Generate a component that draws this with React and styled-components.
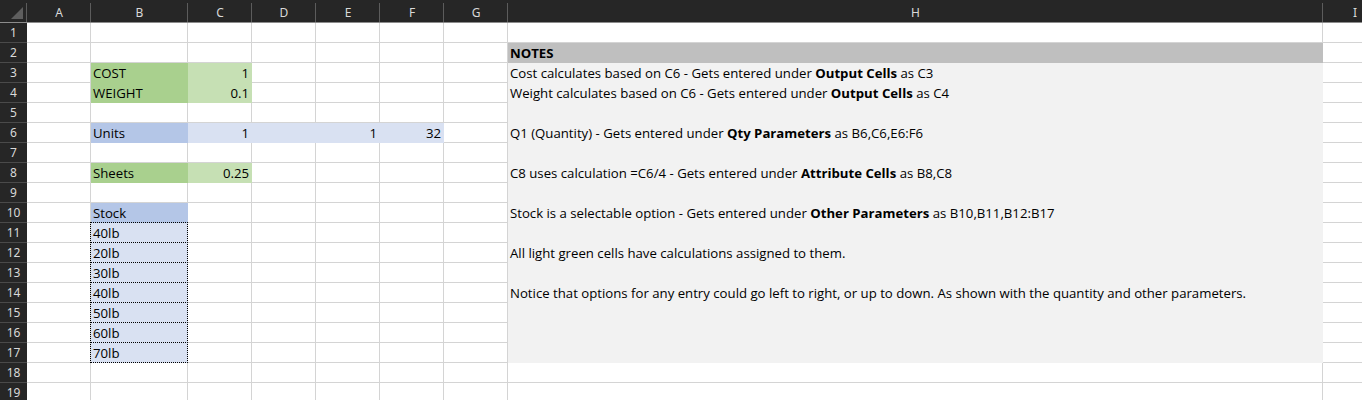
import React from "react";
import styled, { createGlobalStyle } from "styled-components";

const COLORS = {
  header: "#262626",
  headerText: "#d9d9d9",
  headerLine: "#4a4a4a",
  grid: "#d4d4d4",
  green: "#a9d08e",
  lightGreen: "#c6e0b4",
  blue: "#b4c6e7",
  lightBlue: "#d9e1f2",
  notesHead: "#bfbfbf",
  notes: "#f2f2f2",
};

const COLUMNS = [
  { key: "A", width: 64 },
  { key: "B", width: 97 },
  { key: "C", width: 64 },
  { key: "D", width: 64 },
  { key: "E", width: 64 },
  { key: "F", width: 64 },
  { key: "G", width: 64 },
  { key: "H", width: 815 },
  { key: "I", width: 64 },
];

const ROW_COUNT = 19;

// sparse sheet data: row -> column -> cell
const SHEET = {
  2: { H: { fill: COLORS.notesHead, bold: true, text: "NOTES" } },
  3: {
    B: { fill: COLORS.green, text: "COST" },
    C: { fill: COLORS.lightGreen, num: true, text: "1" },
    H: {
      fill: COLORS.notes,
      text: ["Cost calculates based on C6 - Gets entered under ", ["Output Cells"], " as C3"],
    },
  },
  4: {
    B: { fill: COLORS.green, text: "WEIGHT" },
    C: { fill: COLORS.lightGreen, num: true, text: "0.1" },
    H: {
      fill: COLORS.notes,
      text: ["Weight calculates based on C6 - Gets entered under ", ["Output Cells"], " as C4"],
    },
  },
  5: { H: { fill: COLORS.notes } },
  6: {
    B: { fill: COLORS.blue, text: "Units" },
    C: { fill: COLORS.lightBlue, num: true, text: "1" },
    D: { fill: COLORS.lightBlue },
    E: { fill: COLORS.lightBlue, num: true, text: "1" },
    F: { fill: COLORS.lightBlue, num: true, text: "32" },
    H: {
      fill: COLORS.notes,
      text: ["Q1 (Quantity) - Gets entered under ", ["Qty Parameters"], " as B6,C6,E6:F6"],
    },
  },
  7: { H: { fill: COLORS.notes } },
  8: {
    B: { fill: COLORS.green, text: "Sheets" },
    C: { fill: COLORS.lightGreen, num: true, text: "0.25" },
    H: {
      fill: COLORS.notes,
      text: ["C8 uses calculation =C6/4 - Gets entered under ", ["Attribute Cells"], " as B8,C8"],
    },
  },
  9: { H: { fill: COLORS.notes } },
  10: {
    B: { fill: COLORS.blue, text: "Stock" },
    H: {
      fill: COLORS.notes,
      text: [
        "Stock is a selectable option - Gets entered under ",
        ["Other Parameters"],
        " as B10,B11,B12:B17",
      ],
    },
  },
  11: { H: { fill: COLORS.notes } },
  12: {
    H: { fill: COLORS.notes, text: "All light green cells have calculations assigned to them." },
  },
  13: { H: { fill: COLORS.notes } },
  14: {
    H: {
      fill: COLORS.notes,
      text:
        "Notice that options for any entry could go left to right, or up to down. As shown with the quantity and other parameters.",
    },
  },
  15: { H: { fill: COLORS.notes } },
  16: { H: { fill: COLORS.notes } },
  17: { H: { fill: COLORS.notes } },
};

["40lb", "20lb", "30lb", "40lb", "50lb", "60lb", "70lb"].forEach((w, i) => {
  SHEET[11 + i].B = { fill: COLORS.lightBlue, dotted: true, text: w };
});

const GlobalStyle = createGlobalStyle`
  html, body {
    margin: 0;
    padding: 0;
    background: #ffffff;
    overflow: hidden;
  }
`;

const renderText = (text) => {
  if (!text) return null;
  if (typeof text === "string") return text;
  return text.map((part, i) =>
    Array.isArray(part) ? <b key={i}>{part[0]}</b> : <span key={i}>{part}</span>
  );
};

const App = () => {
  return (
    <>
      <GlobalStyle />
      <Sheet>
        <Corner>
          <svg width="27" height="23" viewBox="0 0 27 23">
            <polygon points="23,7 23,19 11,19" fill="#5e5e5e" />
          </svg>
        </Corner>
        {COLUMNS.map((col) => (
          <ColHeader key={col.key}>{col.key}</ColHeader>
        ))}

        {Array.from({ length: ROW_COUNT }, (_, r) => {
          const row = r + 1;
          const data = SHEET[row] || {};
          return (
            <React.Fragment key={row}>
              <RowHeader>{row}</RowHeader>
              {COLUMNS.map((col) => {
                const cell = data[col.key] || {};
                return (
                  <Cell
                    key={col.key}
                    $fill={cell.fill}
                    $num={cell.num}
                    $bold={cell.bold}
                    $dotted={cell.dotted}
                  >
                    {renderText(cell.text)}
                  </Cell>
                );
              })}
            </React.Fragment>
          );
        })}
      </Sheet>
    </>
  );
};

export default App;

const Sheet = styled.div`
  display: grid;
  grid-template-columns: 27px ${COLUMNS.map((c) => `${c.width}px`).join(" ")};
  grid-template-rows: 23px repeat(${ROW_COUNT}, 20px);
  width: max-content;
`;

const Corner = styled.div`
  background: ${COLORS.header};
  border-bottom: 1px solid #8c8c8c;
  box-sizing: border-box;

  svg {
    display: block;
  }
`;

const ColHeader = styled.div`
  position: relative;
  background: ${COLORS.header};
  color: ${COLORS.headerText};
  font-family: "Noto Sans", "Open Sans", sans-serif;
  font-size: 12px;
  display: flex;
  align-items: center;
  justify-content: center;
  padding-top: 2px;
  box-sizing: border-box;
  border-bottom: 1px solid #8c8c8c;

  &::before {
    content: "";
    position: absolute;
    left: -1px;
    top: 3px;
    bottom: 0;
    width: 1px;
    background: #5c5c5c;
  }
`;

const RowHeader = styled.div`
  background: ${COLORS.header};
  color: ${COLORS.headerText};
  font-family: "Noto Sans", "Open Sans", sans-serif;
  font-size: 12px;
  display: flex;
  align-items: center;
  justify-content: center;
  box-sizing: border-box;
  border-bottom: 1px solid ${COLORS.headerLine};
`;

const Cell = styled.div`
  position: relative;
  box-sizing: border-box;
  background: ${(p) => p.$fill || "#ffffff"};
  border-right: 1px solid ${(p) => p.$fill || COLORS.grid};
  border-bottom: 1px solid ${(p) => p.$fill || COLORS.grid};
  font-family: "Open Sans", "Noto Sans", sans-serif;
  font-size: 13.2px;
  font-weight: ${(p) => (p.$bold ? 700 : 400)};
  line-height: 20px;
  color: #000000;
  padding: 0 2px 0 2px;
  text-align: ${(p) => (p.$num ? "right" : "left")};
  white-space: nowrap;

  b {
    font-weight: 700;
  }

  ${(p) =>
    p.$dotted &&
    `
    &::after {
      content: "";
      position: absolute;
      top: -1px;
      left: -1px;
      right: -1px;
      bottom: -1px;
      border: 1px dotted #000000;
      pointer-events: none;
    }
  `}
`;
